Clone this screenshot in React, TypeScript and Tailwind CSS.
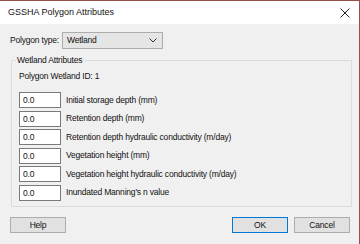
import React from "react";

const rows = [
  "Initial storage depth (mm)",
  "Retention depth (mm)",
  "Retention depth hydraulic conductivity (m/day)",
  "Vegetation height (mm)",
  "Vegetation height hydraulic conductivity (m/day)",
  "Inundated Manning's n value",
];

export default function App() {
  return (
    <div
      className="w-[360px] h-[244px] bg-[#f0f0f0] border-t border-r border-[#9a4d4d] flex flex-col text-[8.5px] tracking-[-0.2px] text-[#111] overflow-hidden"
      style={{ fontFamily: '"Liberation Sans", Arial, sans-serif' }}
    >
      <div className="h-[23px] bg-white flex items-center justify-between pl-[8px] pr-[6px] shrink-0">
        <span className="text-[9px] tracking-normal">GSSHA Polygon Attributes</span>
        <svg width="10" height="10" viewBox="0 0 10 10" className="mr-[3px]">
          <path d="M0.5 0.5 L9.5 9.5 M9.5 0.5 L0.5 9.5" stroke="#222" strokeWidth="1" />
        </svg>
      </div>
      <div className="flex-1 flex flex-col pl-[10px] pr-[7px]">
        <div className="flex items-center mt-[8px] h-[17px]">
          <span className="w-[52px] whitespace-nowrap">Polygon type:</span>
          <div className="w-[101px] h-[17px] bg-[#e5e5e5] border border-[#acacac] flex items-center justify-between pl-[4px] pr-[5px]">
            <span>Wetland</span>
            <svg width="8" height="5" viewBox="0 0 8 5">
              <path d="M0.5 0.5 L4 4 L7.5 0.5" stroke="#333" fill="none" strokeWidth="1" />
            </svg>
          </div>
        </div>
        <div className="relative mt-[11px] ml-[1px] w-[341px] h-[147px] border border-[#dcdcdc] pt-[9px] pl-[7px]">
          <span className="absolute -top-[7px] left-[4px] bg-[#f0f0f0] px-[1px] leading-[13px] whitespace-nowrap">
            Wetland Attributes
          </span>
          <div className="leading-[13px] h-[13px] whitespace-nowrap">Polygon Wetland ID: 1</div>
          <div className="flex flex-col gap-[2px] mt-[9px]">
            {rows.map((r) => (
              <div key={r} className="flex items-center h-[16.5px]">
                <div className="w-[42px] h-[16px] bg-white border border-[#7a7a7a] pl-[3px] flex items-center leading-none">
                  0.0
                </div>
                <span className="ml-[5px] whitespace-nowrap">{r}</span>
              </div>
            ))}
          </div>
        </div>
        <div className="flex items-center mt-[10px]">
          <div className="w-[56px] h-[16px] bg-[#e1e1e1] border border-[#adadad] flex items-center justify-center">
            Help
          </div>
          <div className="flex-1" />
          <div className="w-[56px] h-[16px] bg-[#e1e1e1] border border-[#0078d7] flex items-center justify-center">
            OK
          </div>
          <div className="w-[56px] h-[16px] bg-[#e1e1e1] border border-[#adadad] flex items-center justify-center ml-[6px] mr-[2px]">
            Cancel
          </div>
        </div>
      </div>
    </div>
  );
}
